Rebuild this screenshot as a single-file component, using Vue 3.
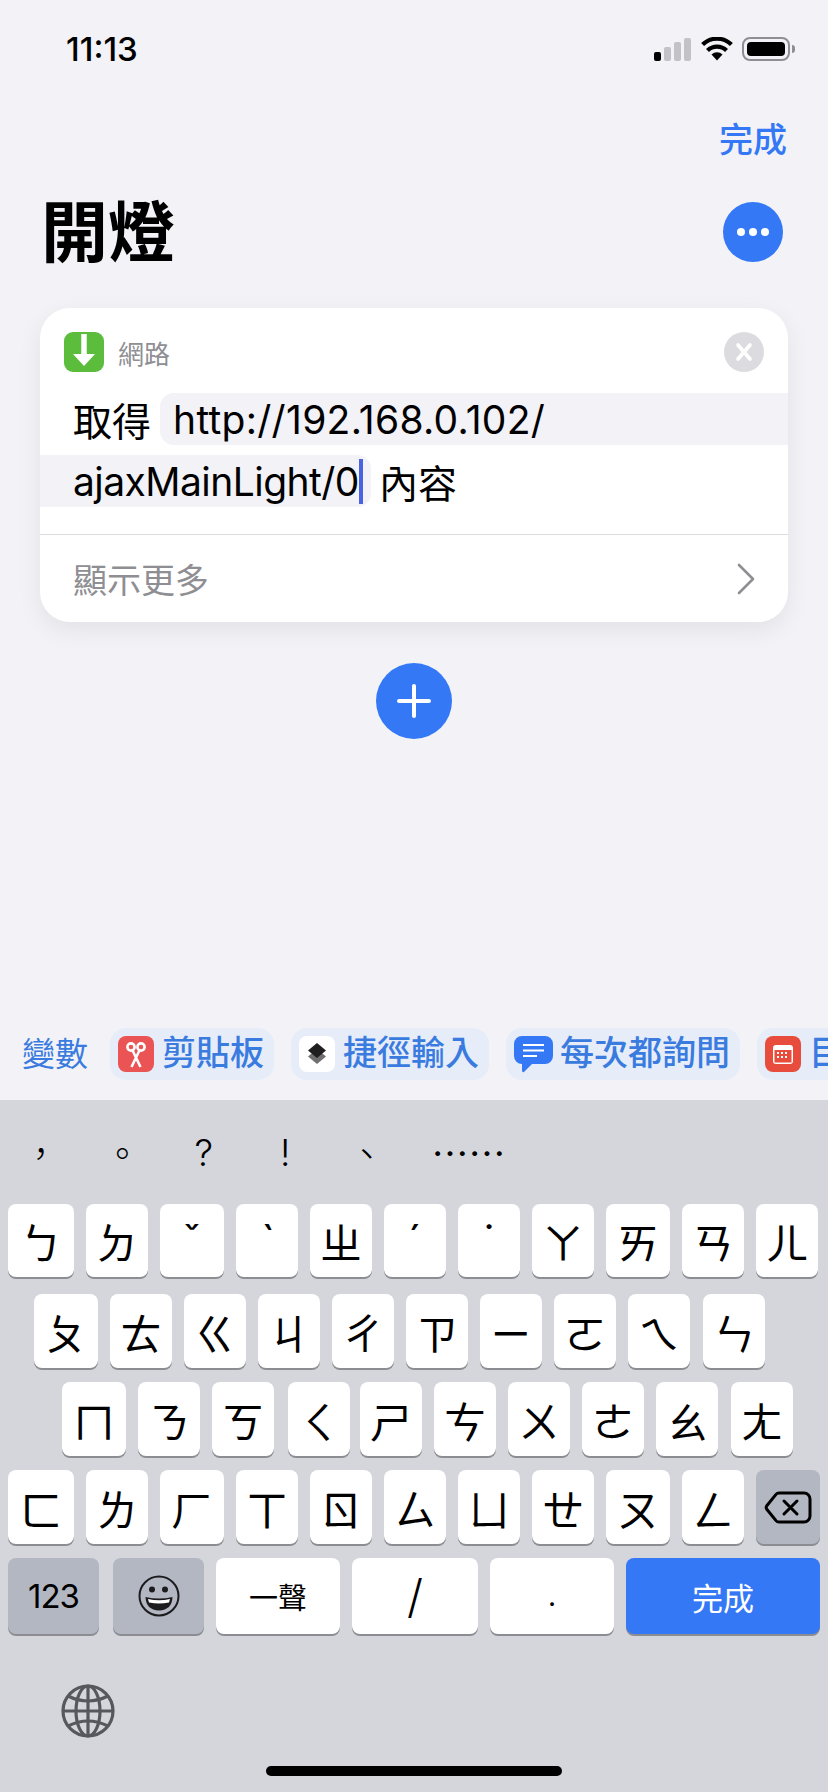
<script setup>
const keyRows = [
  { cls: "row-a", keys: ["ㄅ", "ㄉ", "ˇ", "ˋ", "ㄓ", "ˊ", "˙", "ㄚ", "ㄞ", "ㄢ", "ㄦ"] },
  { cls: "row-b", keys: ["ㄆ", "ㄊ", "ㄍ", "ㄐ", "ㄔ", "ㄗ", "ㄧ", "ㄛ", "ㄟ", "ㄣ"] },
  { cls: "row-c", keys: ["ㄇ", "ㄋ", "ㄎ", "ㄑ", "ㄕ", "ㄘ", "ㄨ", "ㄜ", "ㄠ", "ㄤ"] },
];
const row4 = ["ㄈ", "ㄌ", "ㄏ", "ㄒ", "ㄖ", "ㄙ", "ㄩ", "ㄝ", "ㄡ", "ㄥ"];
const punctuation = ["，", "。", "?", "!", "、"];
</script>

<template>
  <div class="app">
    <div class="status">
      <span class="time">11:13</span>
      <div class="status-icons">
        <div class="signal">
          <i class="bar on" style="height: 9px"></i>
          <i class="bar" style="height: 14px"></i>
          <i class="bar" style="height: 19px"></i>
          <i class="bar" style="height: 23px"></i>
        </div>
        <svg class="wifi" width="32" height="24" viewBox="0 0 32 24">
          <path d="M16 23.5 L10.5 17.5 A7.8 7.8 0 0 1 21.5 17.5 Z" fill="#000" />
          <path d="M6.5 13.5 A13.5 13.5 0 0 1 25.5 13.5" fill="none" stroke="#000" stroke-width="4.2" />
          <path d="M1.6 7.6 A20.5 20.5 0 0 1 30.4 7.6" fill="none" stroke="#000" stroke-width="4.2" />
        </svg>
        <div class="battery"><div class="battery-fill"></div></div>
        <div class="battery-nub"></div>
      </div>
    </div>

    <div class="nav"><span class="done">完成</span></div>

    <div class="title-row">
      <h1 class="title">開燈</h1>
      <div class="more"><i></i><i></i><i></i></div>
    </div>

    <div class="card">
      <div class="card-head">
        <div class="action-icon">
          <svg width="40" height="40" viewBox="0 0 40 40">
            <path d="M20 2 V27" stroke="#fff" stroke-width="5.5" fill="none" />
            <path d="M9 22 H31 L20 34 Z" fill="#fff" />
          </svg>
        </div>
        <span class="action-name">網路</span>
        <div class="close">
          <svg width="20" height="20" viewBox="0 0 20 20">
            <path d="M4 3 L16 17 M16 3 L4 17" stroke="#fff" stroke-width="3.6" stroke-linecap="round" />
          </svg>
        </div>
      </div>
      <div class="line line-one">
        <span class="word">取得</span>
        <div class="token token-start">http://192.168.0.102/</div>
      </div>
      <div class="line line-two">
        <div class="token token-end">ajaxMainLight/0<i class="caret"></i></div>
        <span class="word">內容</span>
      </div>
      <div class="card-foot">
        <span class="show-more">顯示更多</span>
        <svg width="20" height="32" viewBox="0 0 20 32">
          <path d="M4 2 L18 16 L4 30" fill="none" stroke="#8e8e93" stroke-width="2.6" stroke-linecap="round" stroke-linejoin="round" />
        </svg>
      </div>
    </div>

    <div class="add">
      <svg width="34" height="34" viewBox="0 0 34 34">
        <path d="M17 2 V32 M2 17 H32" stroke="#fff" stroke-width="4" stroke-linecap="round" />
      </svg>
    </div>

    <div class="vars">
      <span class="vars-label">變數</span>
      <div class="chip">
        <svg class="chip-icon" width="36" height="36" viewBox="0 0 36 36">
          <rect width="36" height="36" rx="8" fill="#ea5455" />
          <g fill="none" stroke="#fff" stroke-width="2.6">
            <circle cx="13" cy="11" r="3.6" />
            <circle cx="23" cy="11" r="3.6" />
            <path d="M14.6 14.5 L22.5 31 M21.4 14.5 L13.5 31" />
          </g>
        </svg>
        <span class="chip-text">剪貼板</span>
      </div>
      <div class="chip">
        <svg class="chip-icon" width="36" height="36" viewBox="0 0 36 36">
          <rect width="36" height="36" rx="8" fill="#fff" />
          <path d="M18 13 L27 20.5 L18 28 L9 20.5 Z" fill="#707070" />
          <path d="M18 7 L27 14.5 L18 22 L9 14.5 Z" fill="#1f1f1f" />
        </svg>
        <span class="chip-text">捷徑輸入</span>
      </div>
      <div class="chip">
        <svg class="chip-icon wide" width="39" height="37" viewBox="0 0 39 37">
          <path d="M8 0 H31 A8 8 0 0 1 39 8 V20 A8 8 0 0 1 31 28 H18 L10 36 Q8 37 8 34 V28 A8 8 0 0 1 0 20 V8 A8 8 0 0 1 8 0 Z" fill="#3478f6" />
          <path d="M9 9 H30 M9 14.5 H30 M9 20 H23" stroke="#fff" stroke-width="2.2" />
        </svg>
        <span class="chip-text">每次都詢問</span>
      </div>
      <div class="chip">
        <svg class="chip-icon" width="36" height="36" viewBox="0 0 36 36">
          <rect width="36" height="36" rx="8" fill="#e74c3c" />
          <rect x="8" y="9" width="20" height="19" rx="3" fill="#fff" />
          <rect x="9.5" y="14" width="17" height="12.5" fill="#e74c3c" />
          <g fill="#fff">
            <rect x="12" y="16" width="2" height="2" /><rect x="16" y="16" width="2" height="2" />
            <rect x="20" y="16" width="2" height="2" /><rect x="12" y="20" width="2" height="2" />
            <rect x="16" y="20" width="2" height="2" /><rect x="20" y="20" width="2" height="2" />
          </g>
        </svg>
        <span class="chip-text">目</span>
      </div>
    </div>

    <div class="keyboard">
      <div class="candidates">
        <span v-for="p in punctuation" :key="p" class="cand">{{ p }}</span>
        <span class="cand cand-wide">……</span>
      </div>

      <div v-for="row in keyRows" :key="row.cls" class="key-row" :class="row.cls">
        <div v-for="k in row.keys" :key="k" class="key">{{ k }}</div>
      </div>

      <div class="key-row row-d">
        <div v-for="k in row4" :key="k" class="key">{{ k }}</div>
        <div class="key fn backspace">
          <svg width="48" height="33" viewBox="0 0 48 33">
            <path d="M15 2 H40 A6 6 0 0 1 46 8 V25 A6 6 0 0 1 40 31 H15 A4 4 0 0 1 12 29.6 L3 18.5 A3.2 3.2 0 0 1 3 14.5 L12 3.4 A4 4 0 0 1 15 2 Z" fill="none" stroke="#000" stroke-width="3" />
            <path d="M20 10 L33 23 M33 10 L20 23" stroke="#000" stroke-width="3" stroke-linecap="round" />
          </svg>
        </div>
      </div>

      <div class="key-row row-e">
        <div class="key fn num">123</div>
        <div class="key fn emoji">
          <svg width="42" height="42" viewBox="0 0 42 42">
            <circle cx="21" cy="21" r="19.5" fill="none" stroke="#1c1c1e" stroke-width="2" />
            <circle cx="14" cy="14.5" r="3" fill="#1c1c1e" />
            <circle cx="27" cy="14.5" r="3" fill="#1c1c1e" />
            <path d="M7.5 22 Q21 25 34.5 22 Q34 35 21 35.5 Q8 35 7.5 22 Z" fill="#1c1c1e" />
            <path d="M10 24 Q21 26.5 32 24 L31 27.5 Q21 29.5 11 27.5 Z" fill="#fff" />
          </svg>
        </div>
        <div class="key tone">一聲</div>
        <div class="key slash">/</div>
        <div class="key dot">.</div>
        <div class="key return">完成</div>
      </div>

      <div class="globe">
        <svg width="54" height="54" viewBox="0 0 54 54">
          <g fill="none" stroke="#56585c" stroke-width="3.2">
            <circle cx="27" cy="27" r="25" />
            <ellipse cx="27" cy="27" rx="12" ry="25" />
            <path d="M27 2 V52 M2 27 H52" />
            <path d="M7 12 Q27 22 47 12 M7 42 Q27 32 47 42" />
          </g>
        </svg>
      </div>
      <div class="home-bar"></div>
    </div>
  </div>
</template>

<style scoped>
.app {
  width: 828px;
  height: 1792px;
  overflow: hidden;
  display: flex;
  flex-direction: column;
  background: #f2f2f7;
  color: #000;
  font-family: Inter, "Noto Sans CJK TC", sans-serif;
}

.status {
  height: 98px;
  display: flex;
  align-items: center;
  justify-content: space-between;
  padding: 0 33px 0 66px;
  box-sizing: border-box;
}

.time {
  font-size: 33px;
  font-weight: 500;
  letter-spacing: 0;
}

.status-icons {
  display: flex;
  align-items: center;
}

.signal {
  display: flex;
  align-items: flex-end;
  gap: 3px;
  height: 23px;
  margin-right: 10px;
}

.bar {
  width: 7px;
  border-radius: 2px;
  background: #c2c2c7;
}

.bar.on {
  background: #000;
}

.wifi {
  margin-right: 9px;
}

.battery {
  width: 48px;
  height: 24px;
  box-sizing: border-box;
  border: 2px solid #8e8e93;
  border-radius: 8px;
  padding: 3px;
}

.battery-fill {
  height: 100%;
  background: #000;
  border-radius: 4px;
}

.battery-nub {
  width: 3px;
  height: 8px;
  margin-left: 2px;
  background: #8e8e93;
  border-radius: 0 3px 3px 0;
}

.nav {
  height: 84px;
  display: flex;
  align-items: center;
  justify-content: flex-end;
  padding-right: 41px;
}

.done {
  font-size: 34px;
  font-weight: 500;
  line-height: 1;
  color: #3478f6;
}

.title-row {
  height: 100px;
  display: flex;
  align-items: center;
  justify-content: space-between;
  padding: 0 45px 0 41px;
}

.title {
  margin: 0;
  font-size: 67px;
  font-weight: 700;
  line-height: 1;
}

.more {
  width: 60px;
  height: 60px;
  border-radius: 50%;
  background: #3478f6;
  display: flex;
  align-items: center;
  justify-content: center;
  gap: 4px;
}

.more i {
  width: 8px;
  height: 8px;
  border-radius: 50%;
  background: #fff;
}

.card {
  margin: 26px 40px 0;
  height: 314px;
  box-sizing: border-box;
  background: #fff;
  border-radius: 30px;
  box-shadow: 0 8px 24px rgba(0, 0, 0, 0.07);
  overflow: hidden;
}

.card-head {
  display: flex;
  align-items: center;
  padding: 24px 24px 0;
  height: 40px;
  box-sizing: content-box;
}

.action-icon {
  width: 40px;
  height: 40px;
  border-radius: 9px;
  background: #5bbd3b;
}

.action-icon svg {
  display: block;
}

.action-name {
  margin-left: 14px;
  font-size: 26px;
  color: #8e8e93;
}

.close {
  margin-left: auto;
  width: 40px;
  height: 40px;
  border-radius: 50%;
  background: #dcdce0;
  display: flex;
  align-items: center;
  justify-content: center;
}

.line {
  display: flex;
  align-items: center;
  height: 52px;
  font-size: 39px;
}

.line-one {
  margin-top: 21px;
  padding-left: 33px;
}

.line-two {
  margin-top: 10px;
}

.word {
  flex: none;
}

.token {
  height: 52px;
  display: flex;
  align-items: center;
  background: #f2f2f7;
  white-space: nowrap;
}

.token-start {
  flex: 1;
  margin-left: 9px;
  padding-left: 13px;
  letter-spacing: 0.3px;
  border-radius: 14px 0 0 14px;
}

.token-end {
  width: 331px;
  box-sizing: border-box;
  padding-left: 33px;
  margin-right: 8px;
  letter-spacing: -0.55px;
  border-radius: 0 14px 14px 0;
}

.caret {
  width: 4px;
  height: 45px;
  background: #4a63e0;
  flex: none;
}

.card-foot {
  margin-top: 27px;
  height: 88px;
  border-top: 1px solid #dcdce0;
  box-sizing: border-box;
  display: flex;
  align-items: center;
  justify-content: space-between;
  padding: 0 33px 0 33px;
}

.show-more {
  font-size: 34px;
  color: #8e8e93;
}

.add {
  align-self: center;
  margin-top: 41px;
  width: 76px;
  height: 76px;
  border-radius: 50%;
  background: #3478f6;
  display: flex;
  align-items: center;
  justify-content: center;
}

.vars {
  margin-top: auto;
  height: 100px;
  padding: 28px 0 0 22px;
  box-sizing: border-box;
  display: flex;
  align-items: flex-start;
  white-space: nowrap;
  overflow: hidden;
  color: #3a7bdf;
  font-size: 33px;
}

.vars-label {
  flex: none;
  height: 52px;
  line-height: 52px;
  margin-right: 22px;
}

.chip {
  flex: none;
  height: 52px;
  display: flex;
  align-items: center;
  gap: 8px;
  padding: 0 10px 0 8px;
  margin-right: 17px;
  border-radius: 16px;
  background: #e6edf9;
  font-size: 34px;
  font-weight: 500;
}

.chip-text {
  line-height: 50px;
  margin-top: -2px;
}

.chip-icon.wide {
  margin-right: -1px;
}

.keyboard {
  flex: none;
  height: 692px;
  background: #d4d6dc;
  display: flex;
  flex-direction: column;
}

.candidates {
  height: 104px;
  display: flex;
  align-items: center;
  font-size: 37px;
  font-weight: 300;
}

.cand {
  width: 81.5px;
  text-align: center;
}

.cand-wide {
  width: 122px;
  font-family: "Noto Sans CJK TC", sans-serif;
  font-weight: 400;
}

.key-row {
  display: flex;
  gap: 12px;
  height: 74px;
  margin-bottom: 14px;
  flex: none;
}

.row-a {
  padding-left: 8px;
  height: 73px;
  margin-bottom: 17px;
}

.row-b {
  padding-left: 34px;
}

.row-c {
  padding-left: 62px;
}

.row-d {
  padding-left: 8px;
}

.row-e {
  padding-left: 8px;
  height: 76px;
  margin-bottom: 0;
}

.key {
  flex: none;
  width: 62px;
  box-sizing: border-box;
  background: #fff;
  border-radius: 8px;
  box-shadow: 0 2px 0 #8b8d92;
  display: flex;
  align-items: center;
  justify-content: center;
  font-size: 42px;
  font-weight: 400;
}

/* edge keys on the real keyboard are a few px wider than the rest */
.row-a .key:nth-child(1),
.row-d .key:nth-child(1) {
  width: 66px;
}

.row-a .key:nth-child(3),
.row-a .key:nth-child(9),
.row-d .key:nth-child(3),
.row-d .key:nth-child(9),
.row-b .key:nth-child(1),
.row-c .key:nth-child(1) {
  width: 64px;
}

.row-b .key:last-child,
.row-c .key:last-child {
  margin-left: 1px;
}

.row-c .key:nth-child(4) {
  margin-left: 2px;
}

.row-c .key:nth-child(5) {
  margin-left: -2px;
}

.fn {
  background: #b3b7c1;
}

.backspace {
  width: 64px;
}

.num {
  width: 91px;
  font-size: 33px;
  letter-spacing: -1px;
  margin-right: 2px;
}

.emoji {
  width: 91px;
}

.tone {
  width: 124px;
  font-size: 29px;
}

.slash {
  width: 126px;
  font-size: 46px;
  font-weight: 300;
}

.dot {
  width: 124px;
  font-size: 28px;
}

.return {
  width: 194px;
  background: #3478f6;
  color: #fff;
  font-size: 31px;
}

.globe {
  margin: 50px 0 0 61px;
  height: 54px;
}

.globe svg {
  display: block;
}

.home-bar {
  align-self: center;
  margin-top: 28px;
  width: 296px;
  height: 10px;
  border-radius: 5px;
  background: #000;
}
</style>
